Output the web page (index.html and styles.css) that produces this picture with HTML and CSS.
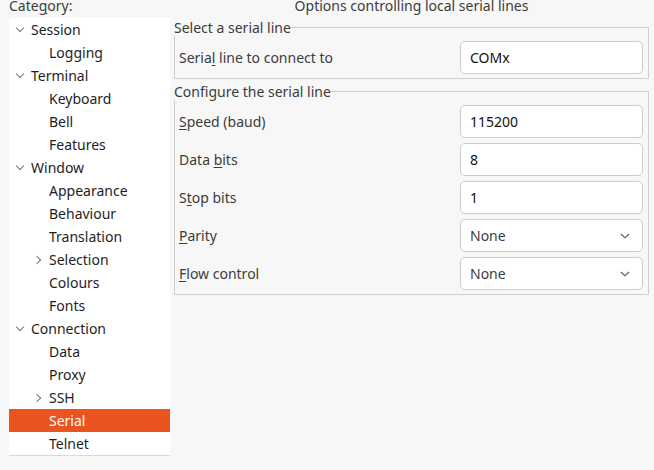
FILE: index.html
```html
<!DOCTYPE html>
<html>
<head>
<meta charset="utf-8">
<link rel="stylesheet" href="styles.css">
</head>
<body>
<div class="app">
  <div class="left">
    <div class="cat-label">Cate<u>g</u>ory:</div>
    <div class="tree">
      <div class="row l1"><span class="chev down"></span>Session</div>
      <div class="row l2">Logging</div>
      <div class="row l1"><span class="chev down"></span>Terminal</div>
      <div class="row l2">Keyboard</div>
      <div class="row l2">Bell</div>
      <div class="row l2">Features</div>
      <div class="row l1"><span class="chev down"></span>Window</div>
      <div class="row l2">Appearance</div>
      <div class="row l2">Behaviour</div>
      <div class="row l2">Translation</div>
      <div class="row l2"><span class="chev right"></span>Selection</div>
      <div class="row l2">Colours</div>
      <div class="row l2">Fonts</div>
      <div class="row l1"><span class="chev down"></span>Connection</div>
      <div class="row l2">Data</div>
      <div class="row l2">Proxy</div>
      <div class="row l2"><span class="chev right"></span>SSH</div>
      <div class="row l2 selected">Serial</div>
      <div class="row l2">Telnet</div>
    </div>
  </div>
  <div class="right">
    <div class="header">Options controlling local serial lines</div>
    <div class="group g1">
      <div class="group-title"><span>Select a serial line</span></div>
      <div class="group-body">
        <div class="field"><span class="label">Seria<u>l</u> line to connect to</span><div class="input">COMx</div></div>
      </div>
    </div>
    <div class="group g2">
      <div class="group-title"><span>Configure the serial line</span></div>
      <div class="group-body">
        <div class="field"><span class="label"><u>S</u>peed (baud)</span><div class="input">115200</div></div>
        <div class="field"><span class="label">Data <u>b</u>its</span><div class="input">8</div></div>
        <div class="field"><span class="label">S<u>t</u>op bits</span><div class="input">1</div></div>
        <div class="field"><span class="label"><u>P</u>arity</span><div class="input select">None<svg class="dd" width="12" height="8" viewBox="0 0 12 8"><path d="M2 2 L6 5.8 L10 2" fill="none" stroke="#555" stroke-width="1.1"/></svg></div></div>
        <div class="field"><span class="label"><u>F</u>low control</span><div class="input select">None<svg class="dd" width="12" height="8" viewBox="0 0 12 8"><path d="M2 2 L6 5.8 L10 2" fill="none" stroke="#555" stroke-width="1.1"/></svg></div></div>
      </div>
    </div>
  </div>
</div>
</body>
</html>
```

FILE: styles.css
```css
* { box-sizing: border-box; }
html, body { margin: 0; padding: 0; }
body {
  background: #f7f7f7;
  font-family: "Noto Sans", "Open Sans", sans-serif;
  font-size: 14px;
  color: #3c3c3c;
  width: 654px;
  height: 470px;
  overflow: hidden;
}
u { text-decoration-thickness: 1px; text-underline-offset: 2px; }
.app {
  display: flex;
  padding-left: 9px;
  padding-right: 5px;
  gap: 4px;
}
.left { width: 161px; flex: none; }
.cat-label {
  height: 16px;
  line-height: 17px;
  margin-top: -3px;
  color: #3c3c3c;
  white-space: nowrap;
}
.tree {
  margin-top: 5px;
  background: #fff;
  border-bottom: 1px solid #d8d8d8;
}
.row {
  height: 23px;
  line-height: 23px;
  color: #1e1e1e;
  position: relative;
  white-space: nowrap;
}
.row.l1 { padding-left: 22px; }
.row.l2 { padding-left: 40px; }
.row.selected { background: #e95420; color: #fff; }
.chev {
  position: absolute;
  width: 6px;
  height: 6px;
  border-right: 1px solid #777;
  border-bottom: 1px solid #777;
}
.chev.down { left: 8px; top: 7px; transform: rotate(45deg); }
.chev.right { left: 25px; top: 9px; transform: rotate(-45deg); }
.right { flex: 1; }
.header {
  text-align: center;
  height: 22px;
  line-height: 17px;
  margin-top: -3px;
  color: #3c3c3c;
}
.group-title {
  display: flex;
  height: 17px;
  line-height: 17px;
  color: #3c3c3c;
}
.group-title::after {
  content: "";
  flex: 1;
  align-self: flex-end;
  height: 8px;
  border-top: 1px solid #cfcfcf;
  border-right: 1px solid #cfcfcf;
}
.group-body {
  border: 1px solid #cfcfcf;
  border-top: none;
  padding: 5px 5px 4px 4px;
  display: flex;
  flex-direction: column;
  gap: 5px;
}
.g2 { margin-top: 4px; }
.field {
  display: flex;
  align-items: center;
  justify-content: space-between;
  height: 33px;
}
.label { color: #3c3c3c; white-space: nowrap; }
.input {
  width: 183px;
  height: 33px;
  background: #fff;
  border: 1px solid #cdcdcd;
  border-radius: 5px;
  padding-left: 9px;
  line-height: 31px;
  color: #111;
  display: flex;
  align-items: center;
}
.input.select { color: #3d3d3d; justify-content: space-between; padding-right: 11px; }
.dd { flex: none; }
```
